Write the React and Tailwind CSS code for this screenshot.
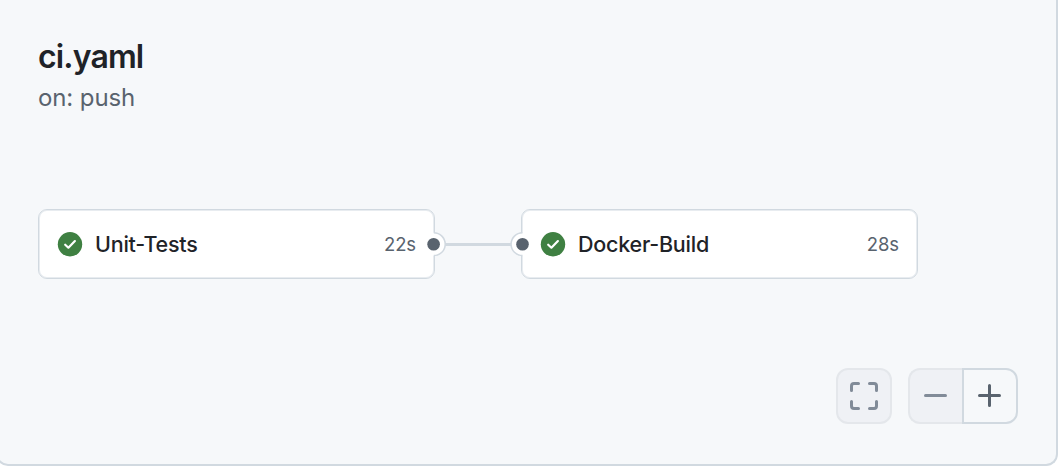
function CheckIcon() {
  return (
    <svg className="size-6 shrink-0 overflow-visible" viewBox="0 0 24 24" fill="none">
      <circle cx="12" cy="12.3" r="12.2" fill="#3f8042" />
      <path d="M7.2 12.7L10.4 15.7L16.9 9.1" stroke="#fff" strokeWidth="2.2" strokeLinecap="round" strokeLinejoin="round" />
    </svg>
  );
}

function Port({ side }) {
  const right = side === "right";
  return (
    <svg
      className={
        right
          ? "absolute top-[21px] -right-[12px] h-[26px] w-[26px] overflow-visible"
          : "absolute top-[21px] -left-[12px] h-[26px] w-[26px] overflow-visible"
      }
      viewBox={right ? "-13.6 -13.2 26 26" : "-12.5 -13.2 26 26"}
      fill="none"
    >
      <circle r="11.6" fill="#fff" />
      <path
        d={right ? "M0.2 -11.4A11.4 11.4 0 0 1 0.2 11.4" : "M0 -11.4A11.4 11.4 0 0 0 0 11.4"}
        stroke="#d1d9e0"
        strokeWidth="1.5"
      />
      <circle r="6.3" fill="#59636e" />
    </svg>
  );
}

function Job({ name, time, port }) {
  return (
    <div className="relative flex h-[70px] w-[397px] items-center rounded-[9px] border border-[#d1d9e0] bg-white px-[19px] shadow-[inset_0_0_0_1px_#e8ecf0]">
      <CheckIcon />
      <span className="ml-[13px] flex-1 text-[21.5px] leading-8 font-medium tracking-[-0.22px] text-[#1f2328]">{name}</span>
      <span className="-mr-px text-[18.5px] leading-8 tracking-[-0.1px] text-[#59636e]">{time}</span>
      <Port side={port} />
    </div>
  );
}

export default function App() {
  return (
    <div className="h-[468px] w-[1058px] overflow-hidden bg-white font-['Inter','Liberation_Sans',sans-serif]">
      <main className="-ml-1 flex h-[466px] w-[1062px] flex-col rounded-b-[12px] border-2 border-t-0 border-[#d1d9e0] bg-[#f6f8fa] pr-[38px] pl-10">
        <h1 className="mt-[37px] text-[32px] leading-10 font-semibold tracking-[-0.85px] text-[#1f2328]">ci.yaml</h1>
        <p className="mt-[3px] text-[24px] leading-9 tracking-[-0.1px] text-[#59636e]">on: push</p>
        <section className="mt-[93px] flex items-center">
          <Job name="Unit-Tests" time="22s" port="right" />
          <div className="h-[3px] w-[86px] bg-[#d1d9e0]" />
          <Job name="Docker-Build" time="28s" port="left" />
        </section>
        <div className="mt-[89px] flex justify-end gap-4">
          <button className="flex size-14 items-center justify-center rounded-[12px] border-2 border-[#e4e7eb] bg-[#eff1f5]">
            <svg className="size-7" viewBox="0 0 28 28" fill="none" stroke="#818b98" strokeWidth="3" strokeLinecap="round">
              <path d="M1.5 8.5V4Q1.5 1.5 4 1.5H8.5M19.5 1.5H24Q26.5 1.5 26.5 4V8.5M26.5 19.5V24Q26.5 26.5 24 26.5H19.5M8.5 26.5H4Q1.5 26.5 1.5 24V19.5" />
            </svg>
          </button>
          <div className="flex">
            <button className="flex h-14 w-[54px] items-center justify-center rounded-l-[12px] border-2 border-r-0 border-[#e4e7eb] bg-[#eff1f5]">
              <svg className="size-6" viewBox="0 0 24 24" stroke="#818b98" strokeWidth="3" strokeLinecap="round">
                <path d="M1.5 11.5H21.5" />
              </svg>
            </button>
            <button className="flex h-14 w-14 items-center justify-center rounded-r-[12px] border-2 border-[#d1d9e0] bg-[#f6f8fa]">
              <svg className="size-6" viewBox="0 0 24 24" stroke="#59636e" strokeWidth="3" strokeLinecap="round">
                <path d="M1.5 11.5H21.5M11.5 1.5V21.5" />
              </svg>
            </button>
          </div>
        </div>
      </main>
    </div>
  );
}
